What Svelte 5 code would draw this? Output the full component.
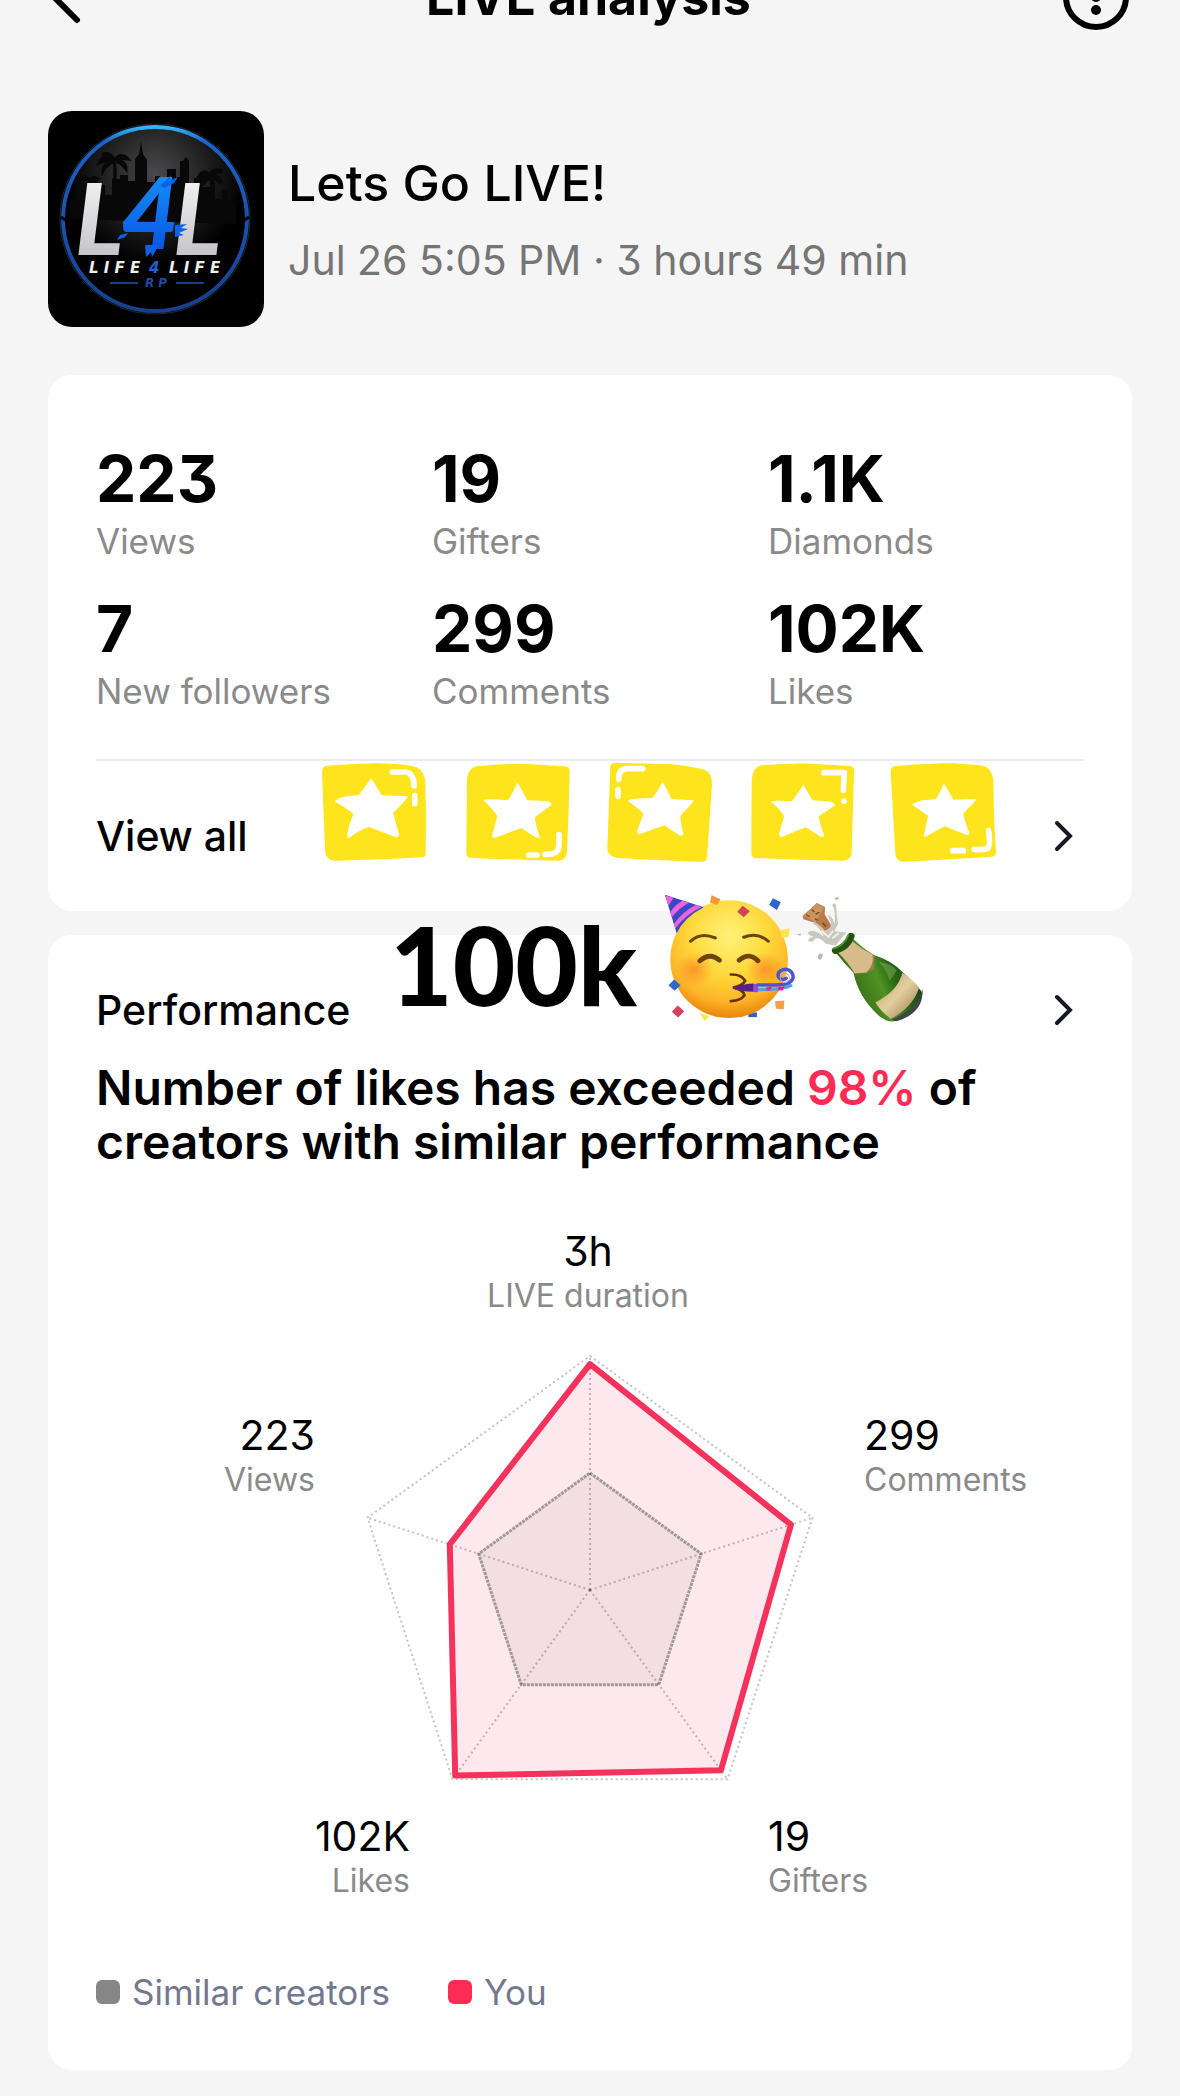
<script lang="ts">
	const stats = [
		{ value: '223', label: 'Views' },
		{ value: '19', label: 'Gifters' },
		{ value: '1.1K', label: 'Diamonds' },
		{ value: '7', label: 'New followers' },
		{ value: '299', label: 'Comments' },
		{ value: '102K', label: 'Likes' }
	];

	// clockwise from the top, score is the share of the full axis
	const axes = [
		{ value: '3h', label: 'LIVE duration', score: 0.965, x: 492, y: 97, anchor: 'middle' },
		{ value: '299', label: 'Comments', score: 0.903, x: 768, y: 281, anchor: 'start' },
		{ value: '19', label: 'Gifters', score: 0.952, x: 672, y: 682, anchor: 'start' },
		{ value: '102K', label: 'Likes', score: 0.98, x: 314, y: 682, anchor: 'end' },
		{ value: '223', label: 'Views', score: 0.63, x: 219, y: 281, anchor: 'end' }
	];

	const cx = 494;
	const cy = 421;
	const radius = 234;

	const point = (i: number, scale: number) => {
		const angle = (i * 2 * Math.PI) / axes.length;
		return [cx + Math.sin(angle) * radius * scale, cy - Math.cos(angle) * radius * scale];
	};

	const ring = (scale: number) => axes.map((_, i) => point(i, scale).join(',')).join(' ');
	const you = axes.map((axis, i) => point(i, axis.score).join(',')).join(' ');
</script>

<main class="page">
	<header class="topbar">
		<button class="icon-button" aria-label="Back">
			<svg width="66" height="66" viewBox="0 0 66 66" fill="none" stroke="#000" stroke-width="6">
				<path d="M29 10 6 33l23 23" stroke-linecap="round" />
			</svg>
		</button>
		<h1>LIVE analysis</h1>
		<button class="icon-button" aria-label="More">
			<svg width="66" height="66" viewBox="0 0 66 66">
				<circle cx="33" cy="33" r="30" fill="none" stroke="#000" stroke-width="6" />
				<circle cx="33" cy="20" r="5" />
				<circle cx="33" cy="33" r="5" />
				<circle cx="33" cy="46" r="5" />
			</svg>
		</button>
	</header>

	<section class="live">
		<svg class="cover" viewBox="0 0 216 216" role="img" aria-label="Life 4 Life RP">
			<defs>
				<linearGradient id="ring" x1="0" y1="0" x2="0" y2="1">
					<stop offset="0" stop-color="#35b5f2" />
					<stop offset="0.08" stop-color="#1c62c8" />
					<stop offset="1" stop-color="#173f8c" />
				</linearGradient>
				<linearGradient id="steel" x1="0" y1="0" x2="0" y2="1">
					<stop offset="0" stop-color="#fff" />
					<stop offset="1" stop-color="#b9b9bd" />
				</linearGradient>
				<linearGradient id="paint" x1="0" y1="0" x2="0" y2="1">
					<stop offset="0" stop-color="#1aa0ff" />
					<stop offset="1" stop-color="#0846dc" />
				</linearGradient>
				<radialGradient id="night" cx="0.5" cy="0.25" r="0.5">
					<stop offset="0" stop-color="#4a4a4c" />
					<stop offset="1" stop-color="#000" />
				</radialGradient>
			</defs>
			<rect width="216" height="216" />
			<circle cx="107" cy="108" r="90" fill="url(#night)" />
			<path
				d="M22 108V88h10v-9h8v8h8V74h9v10h7V68h8v-4h8v6h7V48l4-5 2-12 2 12 4 6v22h8v-6h5v8h7V58h9v8h4V50h3l3-4 3 4v22h5v-5h8v9h8v-5h5v17h7v-9h6v14h8v20z"
				fill="#080809"
			/>
			<path
				d="M65 78q4-14 1-28m0 0q-11-9-15 2 9-4 15-2zm0 0q-2-9-12-7 7 1 12 7zm0 0q7-10 14-2-8-1-14 2zm0 0q12-1 12 8-5-7-12-8zm0 0q-11 2-11 10 4-7 11-10z"
				fill="#080809"
				stroke="#080809"
				stroke-width="3"
			/>
			<path
				d="M163 86q3-12 0-21m0 0q-8-7-12 1 6-2 12-1zm0 0q1-8 11-5-7 1-11 5zm0 0q8 0 10 7-4-5-10-7zm0 0q-9 2-9 9 3-6 9-9zM42 84q3-8 0-15m0 0q-6-5-9 0m9 0q4-4 9 0m-9 0q6 1 7 6"
				fill="none"
				stroke="#080809"
				stroke-width="4"
			/>
			<circle cx="107" cy="108" r="95" fill="none" stroke="#25282e" />
			<circle cx="107" cy="108" r="92" fill="none" stroke="url(#ring)" stroke-width="4" />
			<path d="m13 106 6 4M201 106l-6 4" stroke="#000" stroke-width="3" />
			<g class="logo-big">
				<text x="27" y="144" fill="url(#steel)">L</text>
				<text x="125" y="144" fill="url(#steel)">L</text>
				<text x="73" y="138" fill="url(#paint)">4</text>
			</g>
			<path
				d="m112 75 11-11-2 6 9-4-4 6-9 5zM72 124l8-2-3 4-8 3zM127 114l12-1-6 4 7 1-9 4 5 2-9 2zM97 134l1 12 5-5 1 5 7-12z"
				fill="#0a62ea"
			/>
			<g class="logo-small">
				<text x="41" y="162" fill="#eee">L I F E</text>
				<text x="101" y="162" fill="#1b62d0">4</text>
				<text x="121" y="162" fill="#eee">L I F E</text>
			</g>
			<text class="logo-rp" x="108" y="176" text-anchor="middle" fill="#194ba0">R P</text>
			<path d="M62 172h28M128 172h28" stroke="#17407f" stroke-width="2" />
		</svg>
		<div class="live-text">
			<h2>Lets Go LIVE!</h2>
			<p>Jul 26 5:05 PM · 3 hours 49 min</p>
		</div>
	</section>

	<section class="card">
		<dl class="stats">
			{#each stats as stat}
				<div>
					<dd>{stat.value}</dd>
					<dt>{stat.label}</dt>
				</div>
			{/each}
		</dl>
		<a class="row view-all" href="#all">
			<span>View all</span>
			<svg class="chevron" viewBox="0 0 32 32"><path d="m10 3 13 13-13 13" /></svg>
		</a>

		<!-- five star tiles -->
		<svg class="stars" viewBox="30 30 2040 309" aria-hidden="true">
			<g fill="#fde41c">
				<path d="M50 47Q110 43 200 40 290 42 320 52 344 64 346 100L348 200 347 312Q347 321 335 322 200 330 75 332 47 332 45 300L36 65Q36 49 50 47Z" />
				<path d="M500 49Q600 39 650 42L765 49Q779 50 779 62 777 180 771 305 770 330 745 332 600 329 480 323 469 322 469 310L471 95Q472 55 500 49Z" />
				<path d="M915 38Q1020 41 1080 42 1130 46 1180 58 1207 66 1206 105L1191 322Q1190 335 1178 335 1060 332 920 323 892 319 892 295L901 50Q902 38 915 38Z" />
				<path d="M1355 46Q1450 39 1500 41L1620 48Q1633 50 1632 63L1625 310Q1624 330 1602 332 1470 331 1335 324 1324 322 1324 310L1325 90Q1328 51 1355 46Z" />
				<path d="M1755 48Q1880 38 1930 40L2010 46Q2044 49 2050 90 2050 200 2058 308 2058 318 2046 320 1920 328 1785 335 1758 336 1756 312L1742 65Q1741 51 1755 48Z" />
			</g>
			<g fill="#fff">
				<path d="M183 85Q190 93 215 136L292 139Q298 142 250 188 253 205 267 252 267 261 259 262 220 248 178 231 145 240 118 264 111 264 112 254 115 224 130 194 128 185 75 155 84 138 145 136 160 120 183 85Z" />
				<path d="M622 98Q630 108 652 151L711 153Q725 158 725 164L675 202Q674 214 690 264 682 268 635 235 610 242 554 264 545 264 547 254L562 199Q556 187 521 151 524 145 592 151 601 144 622 98Z" />
				<path d="M1057 97Q1066 106 1084 147L1150 151Q1154 154 1111 197 1110 211 1120 250 1120 260 1110 257L1063 226 990 252Q980 252 981 243L1000 193Q1000 187 954 153 961 143 1025 145 1035 139 1057 97Z" />
				<path d="M1480 104L1507 151 1565 155Q1575 162 1575 166L1527 199Q1526 211 1542 256 1541 263 1533 260L1487 232 1415 261Q1405 261 1408 249L1422 199Q1418 187 1382 153 1386 151 1445 153 1453 146 1480 104Z" />
				<path d="M1901 101Q1910 111 1930 149L1998 147Q2001 150 1960 190 1961 206 1978 250 1976 257 1968 254L1904 229 1849 259Q1841 264 1842 254L1854 197 1807 165Q1804 160 1837 151L1876 148Q1886 137 1901 101Z" />
			</g>
			<g fill="none" stroke="#fff" stroke-width="17" stroke-linecap="round" stroke-linejoin="round">
				<path d="M247 66H285Q312 68 312 107M314 136v25M747 254v35q-2 27-42 24M681 315h-25M998 56H948Q926 58 926 88M924 119v20M1542 68H1603L1600 121M1602 153v1M2036 242Q2043 294 2032 296 2015 300 1992 298M1960 302h-32" />
			</g>
		</svg>
	</section>

	<section class="card performance">
		<a class="row" href="#performance">
			<span>Performance</span>
			<svg class="chevron" viewBox="0 0 32 32"><path d="m10 3 13 13-13 13" /></svg>
		</a>
		<h3>Number of likes has exceeded <em>98%</em> of creators with similar performance</h3>

		<svg class="radar" viewBox="0 0 988 750" role="img" aria-label="Performance chart">
			<polygon points={ring(1)} class="grid" />
			<polygon points={you} class="you" />
			<polygon points={ring(0.5)} class="similar" />
			{#each axes as axis, i}
				<line x1={cx} y1={cy} x2={point(i, 1)[0]} y2={point(i, 1)[1]} class="grid" />
			{/each}
			<polygon points={you} class="outline" />
			<circle {cx} {cy} r="1" fill="#555" />
			{#each axes as axis}
				<text class="axis-value" x={axis.x} y={axis.y} text-anchor={axis.anchor}>{axis.value}</text>
				<text class="axis-label" x={axis.x} y={axis.y + 41} text-anchor={axis.anchor}>{axis.label}</text>
			{/each}
		</svg>

		<ul class="legend">
			<li><i></i>Similar creators</li>
			<li class="mine"><i></i>You</li>
		</ul>

		<div class="sticker">
			<span>100k</span>
			<svg viewBox="790 28 740 373" aria-hidden="true">
				<defs>
					<radialGradient id="face" cx="0.5" cy="0.3" r="0.68">
						<stop offset="0" stop-color="#fff27a" />
						<stop offset="0.5" stop-color="#ffd83a" />
						<stop offset="0.82" stop-color="#fdb42a" />
						<stop offset="1" stop-color="#ec8c0d" />
					</radialGradient>
					<radialGradient id="blush">
						<stop offset="0" stop-color="#f96b20" stop-opacity="0.55" />
						<stop offset="1" stop-color="#f96b20" stop-opacity="0" />
					</radialGradient>
					<linearGradient id="glass" x1="0" y1="0.7" x2="1" y2="0.3">
						<stop offset="0" stop-color="#18380d" />
						<stop offset="0.25" stop-color="#3d741b" />
						<stop offset="0.5" stop-color="#4f9222" />
						<stop offset="0.65" stop-color="#2d6818" />
						<stop offset="1" stop-color="#12330e" />
					</linearGradient>
					<linearGradient id="label" x1="0" y1="0" x2="1" y2="1">
						<stop offset="0" stop-color="#b99a6d" />
						<stop offset="0.5" stop-color="#e5ce9d" />
						<stop offset="1" stop-color="#8f744d" />
					</linearGradient>
				</defs>

				<g transform="scale(1 0.9333)">
					<path d="M1032 398h24v14h-24z" fill="#2a63c8" />
					<ellipse cx="978" cy="238" rx="165" ry="177" fill="url(#face)" />
					<circle cx="882" cy="268" r="52" fill="url(#blush)" />
					<circle cx="1078" cy="268" r="52" fill="url(#blush)" />
					<path d="M798 44 907 82Q852 112 831 160Z" fill="#3b48c4" />
					<path d="m799 46 23 7-14 24zM847 62l18 6q-25 14-48 44l-4-16q14-22 34-34zM884 75l16 7q-42 20-73 64l-4-14q27-39 61-57z" fill="#ee62dc" />
					<g fill="none" stroke="#70420c" stroke-linecap="round">
						<path d="M870 184q29-29 69-10M1019 172q40-16 69 12" stroke-width="9" />
						<path d="M896 243q28-27 55-2M1006 241q28-26 53 2" stroke-width="14" />
						<path d="M983 284q30-1 40 19-6 15-34 20 30 8 32 23-8 16-38 18" stroke="#673300" stroke-width="8" />
					</g>
					<path d="M989 326q30-15 58-15v25q-35 0-58-10Z" fill="#54218e" />
					<path d="M1047 312h12v25h-12z" fill="#8e4be0" />
					<path d="M1059 315q58 2 83-3 24-14 11-35-13-15-31-4-11 9-4 21 9 10 20 1" fill="none" stroke="#4c58c8" stroke-width="10" stroke-linecap="round" />
					<path d="M1059 329q75 2 95-15" fill="none" stroke="#49a2e8" stroke-width="10" />
					<path d="m1083 322 15-1-5 11-11-1zM1117 321l16-1-4 12-15-1z" fill="#df287e" />
					<circle cx="1134" cy="294" r="13" fill="none" stroke="#c59ae8" stroke-width="3" />
					<path d="m929 46 25 12-10 17-20-8z" fill="#f4983b" />
					<path d="m1016 77 20 17-17 18-18-17z" fill="#d4405e" />
					<path d="m1101 55 22 12-11 23-22-16z" fill="#2b67cb" />
					<path d="m1123 150 25-4-3 25-21 3z" fill="#f9e44a" />
					<path d="m824 299 18 17-17 17-17-17z" fill="#2f67cc" />
					<path d="m834 377 18 17-17 19-18-17z" fill="#d5425f" />
					<path d="m894 399 29 11-14 14z" fill="#f7e84b" />
					<path d="m1107 364 26-2-2 26-22-1z" fill="#f5a047" />

					<path d="m1184 108 40-39 23 12-1 22 20 36-25 22-21-32-33-11z" fill="#b97a48" />
					<path d="m1187 107 37-37 20 13-24 44z" fill="#ca9361" />
					<path d="m1196 105 6 4m9-19 5 5m6 7 8-4m-10 19 5 3m16 10 8 9" stroke="#754521" stroke-width="4" stroke-linecap="round" />
					<path
						d="M1214 124q24 14 31 27 21 2 18-27-9-15-6-20 14 11 17 30Q1278 92 1267 75q7-10 11 0 2 38 6 57-9 13-10 22l33 4-31 39-25-5q-22-23-33-15-5 12-17 7-5-7 14-15-16-2-16-12 17-11 44 13-4-25-29-38z"
						fill="#c9c7bf"
					/>
					<path d="m1237 152 20 19 13-19m-3 23 19-15" fill="none" stroke="#f3f1e9" stroke-width="5" />
					<path d="m1273 55 11-5 2 8-8 3zM1167 163l13-2-2 7zM1229 224q6-7 12 0l-4 14q-10 5-10-7z" fill="#bfb8b0" />
					<path
						d="M1274 214q26-9 47-42Q1352 205 1385 226 1432 240 1468 280 1512 322 1520 340 1510 404 1438 425 1420 428 1394 404 1340 350 1327 279 1300 250 1274 214z"
						fill="url(#glass)"
					/>
					<path d="M1282 216q24-9 36-37 33 31 67 47 0 27-20 52-15 1-35 3-15-30-48-65z" fill="#d8bb8b" />
					<path d="m1387 226-4 43-20 9q23-24 17-54z" fill="#a47d48" />
					<path d="M1276 212q34-11 44-43" fill="none" stroke="#235413" stroke-width="20" stroke-linecap="round" />
					<path d="M1271 206q31-10 41-40" fill="none" stroke="#529831" stroke-width="6" stroke-linecap="round" />
					<path d="M1464 279q31 22 47 45-20 62-80 93-27-22-43-49 63-33 76-89Z" fill="url(#label)" />
					<path d="M1434 418q76-28 86-91 6 70-70 97-10 2-16-6Z" fill="#3c4746" />
					<path d="M1398 246q35 4 50 25-8 17-20 30-8-30-30-55Z" fill="#9ad16c" opacity="0.35" />
				</g>
			</svg>
		</div>
	</section>
</main>

<style>
	:global(body) {
		margin: 0;
		background: #f5f5f5;
	}

	.page {
		display: flex;
		flex-direction: column;
		padding: 0 48px 24px;
		overflow: hidden;
		color: #000;
		font-family: Inter, 'Liberation Sans', sans-serif;
		font-feature-settings: 'cv09';
	}

	h1,
	h2,
	h3,
	p,
	dl,
	dd,
	ul {
		margin: 0;
		padding: 0;
	}

	a {
		color: inherit;
		text-decoration: none;
	}

	/* scrolled partly out of view */
	.topbar {
		display: flex;
		align-items: center;
		justify-content: space-between;
		height: 72px;
		margin-top: -39px;
		padding-right: 3px;
	}

	h1 {
		font-size: 50px;
		font-weight: 700;
		line-height: 60px;
	}

	.icon-button {
		padding: 0;
		border: 0;
		background: none;
	}

	.icon-button svg {
		display: block;
	}

	.live {
		display: flex;
		align-items: center;
		gap: 24px;
		margin: 78px 0 48px;
	}

	.cover {
		flex: none;
		width: 216px;
		border-radius: 24px;
	}

	.logo-big {
		font: italic 900 100px Lato, sans-serif;
	}

	.logo-small {
		font: italic 700 15px 'DejaVu Sans', sans-serif;
	}

	.logo-rp {
		font: italic 700 12px 'DejaVu Sans', sans-serif;
	}

	.live-text {
		display: flex;
		flex-direction: column;
		gap: 20px;
		padding-top: 2px;
	}

	h2 {
		font-size: 50px;
		font-weight: 500;
		line-height: 60px;
	}

	.live-text p {
		color: #757575;
		font-size: 41px;
		line-height: 54px;
	}

	.card {
		position: relative;
		padding: 0 48px;
		border-radius: 24px;
		background: #fff;
	}

	.stats {
		display: grid;
		grid-template-columns: repeat(3, 1fr);
		gap: 28px 20px;
		padding: 66px 0 46px;
	}

	.stats div {
		display: flex;
		flex-direction: column;
		gap: 2px;
	}

	dd {
		font-size: 64px;
		font-weight: 700;
		line-height: 76px;
	}

	dt {
		color: #8a8a8a;
		font-size: 35px;
		line-height: 44px;
	}

	.row {
		display: flex;
		align-items: center;
		justify-content: space-between;
		padding-right: 5px;
		font-size: 41px;
		font-weight: 500;
		line-height: 50px;
	}

	.view-all {
		padding-top: 50px;
		padding-bottom: 50px;
		border-top: 2px solid #ebebeb;
	}

	.chevron {
		width: 32px;
		height: 32px;
		fill: none;
		stroke: #161823;
		stroke-width: 4;
		stroke-linecap: round;
	}

	.stars {
		position: absolute;
		left: 272px;
		bottom: 48px;
		width: 680px;
	}

	.performance {
		margin-top: 24px;
		padding-top: 50px;
		padding-bottom: 56px;
	}

	h3 {
		margin-top: 26px;
		font-size: 48px;
		font-weight: 600;
		line-height: 54px;
	}

	em {
		color: #fe2c55;
		font-style: normal;
	}

	.radar {
		display: block;
		width: 100%;
	}

	.grid {
		fill: none;
		stroke: #000;
		stroke-opacity: 0.24;
		stroke-width: 2;
		stroke-dasharray: 2 3;
	}

	.you {
		fill: #fde8ed;
	}

	.outline {
		fill: none;
		stroke: #f5325b;
		stroke-width: 6;
		stroke-linejoin: round;
	}

	.similar {
		fill: #f2dee3;
		stroke: #a2979b;
		stroke-width: 3;
		stroke-dasharray: 3 1;
	}

	.axis-value {
		font-size: 41px;
	}

	.axis-label {
		fill: #8a8a8a;
		font-size: 32px;
	}

	.legend {
		display: flex;
		gap: 58px;
		margin-top: 51px;
		color: #737891;
		font-size: 35px;
		line-height: 44px;
		list-style: none;
	}

	.legend li {
		display: flex;
		align-items: center;
		gap: 12px;
	}

	.legend i {
		width: 24px;
		height: 24px;
		border-radius: 6px;
		background: #868686;
	}

	.legend .mine i {
		background: #fe2c55;
	}

	.sticker {
		position: absolute;
		top: -45px;
		left: 342px;
		display: flex;
		align-items: flex-start;
		gap: 25px;
	}

	.sticker span {
		font: 900 108px/148px Lato, sans-serif;
	}

	.sticker svg {
		width: 264px;
		height: 133px;
	}
</style>
